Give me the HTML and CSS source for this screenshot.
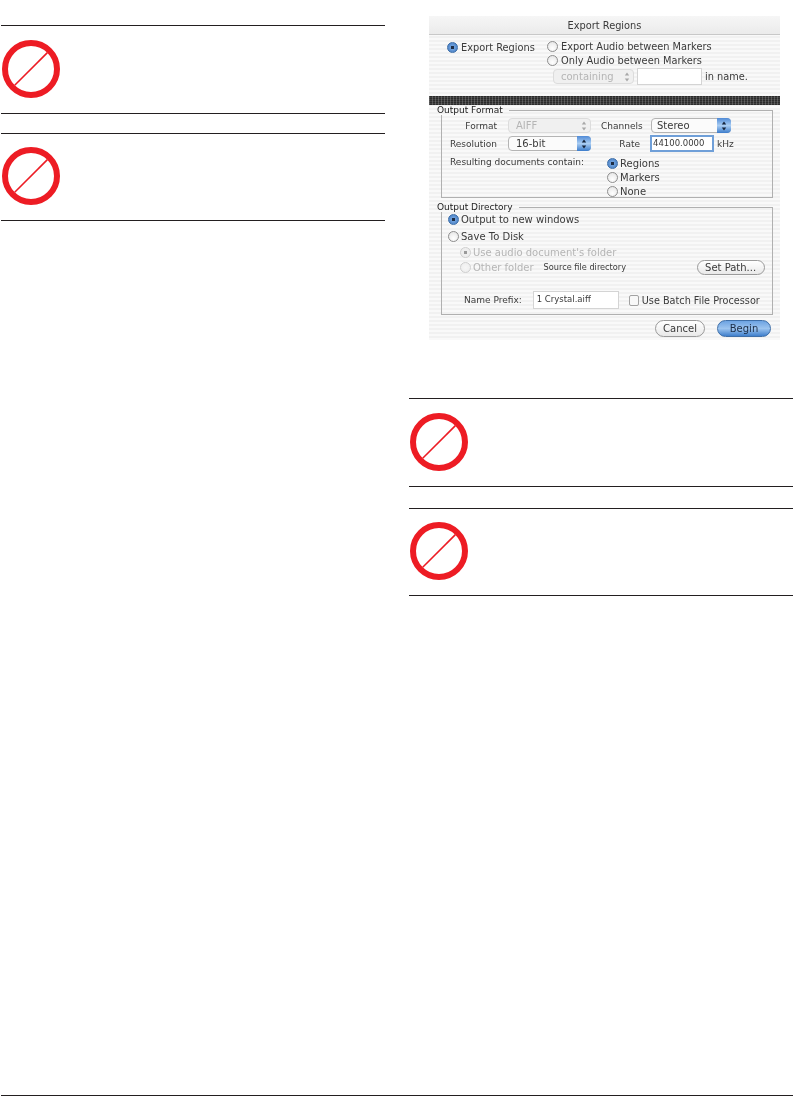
FILE: index.html
```html
<!DOCTYPE html>
<html lang="en">
<head>
    <meta charset="UTF-8">
    <meta name="viewport" content="width=device-width, initial-scale=1.0">
    <title>Export Regions</title>
    <link rel="stylesheet" href="styles.css">
</head>
<body>
    <svg class="defs" width="0" height="0" aria-hidden="true">
        <symbol id="no-sign" viewBox="0 0 58 58">
            <circle cx="29" cy="29" r="26" fill="none" stroke="#ed1c24" stroke-width="6"/>
            <line x1="12.7" y1="45.3" x2="45.4" y2="12.6" stroke="#ed1c24" stroke-width="1.6"/>
        </symbol>
        <symbol id="arrows" viewBox="0 0 6 10">
            <path d="M3 0.5 L5.2 3.6 H0.8 Z M3 9.5 L0.8 6.4 H5.2 Z"/>
        </symbol>
    </svg>
    <div class="page">
        <main class="columns">
            <section class="col-left">
                <div class="note"><svg class="no-sign"><use href="#no-sign"/></svg></div>
                <div class="note"><svg class="no-sign"><use href="#no-sign"/></svg></div>
            </section>
            <section class="col-right">
                <div class="dialog">
                    <div class="titlebar">Export Regions</div>
                    <div class="export-top">
                        <div class="opt first-opt"><span class="radio on"></span>Export Regions</div>
                        <div class="export-choices">
                            <div class="opt"><span class="radio"></span>Export Audio between Markers</div>
                            <div class="opt"><span class="radio"></span>Only Audio between Markers</div>
                            <div class="contain-row">
                                <span class="popup off contain-popup">containing<span class="stepper"><svg><use href="#arrows"/></svg></span></span>
                                <span class="field contain-field"></span>
                                <span>in name.</span>
                            </div>
                        </div>
                    </div>
                    <div class="band"></div>
                    <fieldset class="group format-group">
                        <legend>Output Format</legend>
                        <div class="format-grid">
                            <span class="lbl right">Format</span>
                            <span class="popup off">AIFF<span class="stepper"><svg><use href="#arrows"/></svg></span></span>
                            <span class="lbl channels">Channels</span>
                            <span class="popup stereo">Stereo<span class="stepper blue"><svg><use href="#arrows"/></svg></span></span>
                            <span class="lbl right">Resolution</span>
                            <span class="popup">16-bit<span class="stepper blue"><svg><use href="#arrows"/></svg></span></span>
                            <span class="lbl right">Rate</span>
                            <span class="rate-wrap"><span class="field focus">44100.0000</span><span>kHz</span></span>
                        </div>
                        <div class="contain-docs">
                            <span class="lbl docs-lbl">Resulting documents contain:</span>
                            <div class="docs-opts">
                                <div class="opt"><span class="radio on"></span>Regions</div>
                                <div class="opt"><span class="radio"></span>Markers</div>
                                <div class="opt"><span class="radio"></span>None</div>
                            </div>
                        </div>
                    </fieldset>
                    <fieldset class="group dir-group">
                        <legend>Output Directory</legend>
                        <div class="opt big"><span class="radio on"></span>Output to new windows</div>
                        <div class="opt big save-opt"><span class="radio"></span>Save To Disk</div>
                        <div class="sub-opts">
                            <div class="opt big off"><span class="radio on off"></span>Use audio document's folder</div>
                            <div class="other-row">
                                <div class="opt big off"><span class="radio off"></span>Other folder</div>
                                <span class="small-text">Source file directory</span>
                                <span class="btn set-path">Set Path...</span>
                            </div>
                        </div>
                        <div class="prefix-row">
                            <span>Name Prefix:</span>
                            <span class="field prefix-field">1 Crystal.aiff</span>
                            <span class="check"></span>
                            <span class="batch">Use Batch File Processor</span>
                        </div>
                    </fieldset>
                    <div class="actions">
                        <span class="btn cancel">Cancel</span>
                        <span class="btn begin">Begin</span>
                    </div>
                </div>
                <div class="note-list">
                    <div class="note"><svg class="no-sign"><use href="#no-sign"/></svg></div>
                    <div class="note"><svg class="no-sign"><use href="#no-sign"/></svg></div>
                </div>
            </section>
        </main>
        <footer class="page-footer"></footer>
    </div>
</body>
</html>
```

FILE: styles.css
```css
* {
    box-sizing: border-box;
}
body {
    margin: 0;
    background-color: white;
    font-family: "DejaVu Sans", sans-serif;
    font-size: 9px;
    color: #3a3a3a;
}
.defs {
    position: absolute;
}
.page {
    display: flex;
    flex-direction: column;
    height: 1096px;
}
.columns {
    flex: 1;
    display: grid;
    grid-template-columns: 384px 384px;
    column-gap: 24px;
    padding-left: 1px;
}
.col-left {
    display: flex;
    flex-direction: column;
    gap: 19px;
    padding-top: 25px;
}
.col-right {
    padding-top: 16px;
}
.note-list {
    display: flex;
    flex-direction: column;
    gap: 21px;
    margin-top: 58px;
}
.note {
    height: 89px;
    padding: 14px 0 0 1px;
    border-top: 1px solid #231f20;
    border-bottom: 1px solid #231f20;
}
.note:last-child {
    height: 88px;
    padding-top: 13px;
}
.no-sign {
    display: block;
    width: 58px;
    height: 58px;
}
.page-footer {
    height: 1px;
    margin-left: 1px;
    background-color: #231f20;
}

/* the dialog */
.dialog {
    width: 351px;
    height: 324px;
    margin-left: 20px;
    border-radius: 3px 3px 0 0;
    background: repeating-linear-gradient(#f1f1f1 0, #f1f1f1 2px, #f9f9f9 2px, #f9f9f9 4px);
    filter: blur(0.45px);
}
.titlebar {
    height: 19px;
    line-height: 20px;
    text-align: center;
    font-size: 9.8px;
    background: linear-gradient(#f6f6f6, #ebebeb);
    border-bottom: 1px solid #c8c8c8;
}
.export-top {
    display: flex;
    height: 61px;
    padding: 4px 0 0 18px;
    font-size: 9.8px;
}
.export-top .opt {
    height: 14px;
    gap: 3px;
}
.first-opt {
    width: 100px;
    margin-top: 1px;
}
.opt {
    display: flex;
    align-items: center;
    height: 13px;
    gap: 2px;
    white-space: nowrap;
}
.big {
    font-size: 10px;
}
.off {
    color: #b5b5b5;
}
.radio {
    flex: none;
    width: 11px;
    height: 11px;
    border-radius: 50%;
    border: 1px solid #8e8e8e;
    background: radial-gradient(circle at 50% 70%, #ffffff, #e2e2e2);
}
.radio.on {
    border-color: #3d6ea8;
    background: radial-gradient(circle, #1d2c44 0 1.5px, #6d9fdb 2px, #3f78c0 100%);
}
.radio.off {
    border-color: #cfcfcf;
    background: radial-gradient(circle, #f6f6f6, #ececec);
}
.radio.on.off {
    background: radial-gradient(circle, #9a9a9a 0 1.5px, #eeeeee 2px);
}
.contain-row {
    display: flex;
    align-items: center;
    gap: 3px;
    margin: 1px 0 0 6px;
    white-space: nowrap;
}
.popup {
    position: relative;
    display: flex;
    align-items: center;
    height: 15px;
    padding-left: 7px;
    border: 1px solid #b4b4b4;
    border-radius: 4px;
    background-color: #fbfbfb;
    font-size: 10px;
}
.popup.off {
    border-color: #dcdcdc;
    background-color: #f0f0f0;
    color: #b5b5b5;
}
.stereo {
    padding-left: 5px;
}
.stepper {
    position: absolute;
    top: -1px;
    right: -1px;
    bottom: -1px;
    display: flex;
    align-items: center;
    justify-content: center;
    width: 14px;
    border-radius: 0 4px 4px 0;
    fill: #a8a8a8;
}
.stepper svg {
    width: 6px;
    height: 10px;
}
.stepper.blue {
    background: linear-gradient(#4f8ad6, #a9cdf3 50%, #3c7ccb);
    fill: #15233a;
}
.contain-popup {
    width: 81px;
}
.field {
    display: block;
    border: 1px solid #d4d4d4;
    background-color: white;
}
.contain-field {
    width: 65px;
    height: 17px;
}
.band {
    height: 9px;
    background-color: #3e3e3e;
    background-image:
        repeating-linear-gradient(90deg, rgba(255, 255, 255, 0.18) 0 1px, transparent 1px 3px),
        repeating-linear-gradient(0deg, rgba(0, 0, 0, 0.3) 0 1px, transparent 1px 2px);
}
.group {
    min-width: 0;
    margin: 0 7px 0 12px;
    padding: 0;
    border: 1px solid #b0b0b0;
}
.group legend {
    margin-left: -5px;
    padding: 0 6px 0 0;
    font-size: 9px;
    line-height: 10px;
    color: #222;
}
.format-group {
    height: 93px;
}
.format-grid {
    display: grid;
    grid-template-columns: 55px 83px 38px 80px;
    column-gap: 11px;
    row-gap: 2px;
    align-items: center;
    margin-top: 3px;
}
.lbl {
    white-space: nowrap;
}
.right {
    text-align: right;
}
.channels {
    margin-left: -1px;
}
.rate-wrap {
    display: flex;
    align-items: center;
    gap: 3px;
    margin-left: -1px;
}
.focus {
    flex: none;
    width: 64px;
    height: 17px;
    padding-left: 1px;
    line-height: 13px;
    border: 2px solid #6f9fd8;
    font-size: 8.5px;
}
.contain-docs {
    display: flex;
    margin-top: 4px;
    padding-left: 8px;
}
.docs-lbl {
    width: 157px;
    margin-top: 1px;
}
.docs-opts .opt {
    height: 14px;
    font-size: 10px;
}
.dir-group {
    height: 113px;
    margin-top: 4px;
}
.dir-group > .opt {
    margin: 1px 0 0 6px;
}
.save-opt {
    margin-top: 4px !important;
}
.sub-opts {
    padding: 3px 0 0 18px;
}
.sub-opts .opt {
    margin-bottom: 2px;
}
.other-row {
    display: flex;
    align-items: flex-start;
}
.small-text {
    width: 153px;
    margin-left: 10px;
    font-size: 8.2px;
    line-height: 13px;
}
.btn {
    display: flex;
    align-items: center;
    justify-content: center;
    border: 1px solid #9a9a9a;
    border-radius: 9px;
    background: linear-gradient(#ffffff, #e9e9e9);
    font-size: 10px;
    white-space: nowrap;
}
.set-path {
    width: 68px;
    height: 15px;
    margin-top: -1px;
}
.prefix-row {
    display: flex;
    align-items: center;
    margin: 15px 0 0 22px;
    white-space: nowrap;
}
.prefix-field {
    width: 86px;
    height: 18px;
    margin: 0 10px 0 11px;
    padding-left: 3px;
    font-size: 8.5px;
    line-height: 15px;
}
.check {
    flex: none;
    width: 10px;
    height: 11px;
    margin-right: 3px;
    border: 1px solid #a2a2a2;
    border-radius: 2px;
    background-color: #f8f8f8;
}
.batch {
    font-size: 9.7px;
}
.actions {
    display: flex;
    justify-content: flex-end;
    gap: 12px;
    margin-top: 5px;
    padding-right: 9px;
}
.cancel {
    width: 50px;
    height: 17px;
}
.begin {
    width: 54px;
    height: 17px;
    border-color: #3f6fa8;
    background: linear-gradient(#6da3e2, #9cc4ef 50%, #3f7fcc);
    color: #1b2c45;
}
```
